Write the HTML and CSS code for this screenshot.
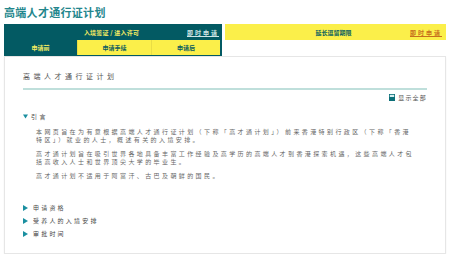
FILE: index.html
```html
<!DOCTYPE html>
<html lang="zh-CN">
<head>
<meta charset="utf-8">
<link rel="stylesheet" href="styles.css">
</head>
<body>
<div class="page">
  <h1 class="title">高端人才通行证计划</h1>
  <div class="tabs">
    <div class="tab-main">
      <div class="tab-top">
        <span></span>
        <span class="tab-label">入境签证 / 进入许可</span>
        <a class="apply apply-light" href="#">即时申请</a>
      </div>
      <div class="tab-sub">
        <span class="sub sub-active">申请前</span>
        <span class="sub">申请手续</span>
        <span class="sub">申请后</span>
      </div>
    </div>
    <div class="tab-side">
      <span></span>
      <span class="tab-label-dark">延长逗留期限</span>
      <a class="apply apply-orange" href="#">即时申请</a>
    </div>
  </div>
  <div class="card">
    <h2 class="card-title">高端人才通行证计划</h2>
    <div class="show-all">
      <svg class="show-icon" width="6" height="7" viewBox="0 0 6 7"><rect x="0" y="0" width="6" height="7" fill="#0b6f78"/><rect x="0.8" y="0.8" width="4.4" height="2.2" fill="#d6eef0"/></svg>
      <span>显示全部</span>
    </div>
    <div class="section open">
      <div class="sec-head">
        <svg class="tri" width="5" height="5" viewBox="0 0 5 5"><polygon points="0,0.5 5,0.5 2.5,4.5" fill="#1a8fa0"/></svg>
        <span>引言</span>
      </div>
      <div class="sec-body">
        <p>本网页旨在为有意根据高端人才通行证计划（下称「高才通计划」）前来香港特别行政区（下称「香港特区」）就业的人士，概述有关的入境安排。</p>
        <p>高才通计划旨在吸引世界各地具备丰富工作经验及高学历的高端人才到香港探索机遇，这些高端人才包括高收入人士和世界顶尖大学的毕业生。</p>
        <p>高才通计划不适用于阿富汗、古巴及朝鲜的国民。</p>
      </div>
    </div>
    <div class="links">
      <div class="sec-link"><svg class="tri-r" width="5" height="6" viewBox="0 0 5 6"><polygon points="0,0 5,3 0,6" fill="#1a8fa0"/></svg><span>申请资格</span></div>
      <div class="sec-link"><svg class="tri-r" width="5" height="6" viewBox="0 0 5 6"><polygon points="0,0 5,3 0,6" fill="#1a8fa0"/></svg><span>受养人的入境安排</span></div>
      <div class="sec-link"><svg class="tri-r" width="5" height="6" viewBox="0 0 5 6"><polygon points="0,0 5,3 0,6" fill="#1a8fa0"/></svg><span>审批时间</span></div>
    </div>
  </div>
</div>
</body>
</html>
```

FILE: styles.css
```css
* { box-sizing: border-box; }
html, body { margin: 0; padding: 0; background: #ffffff; }
body { font-family: "Noto Sans CJK SC", "Noto Sans", sans-serif; }
.page { padding: 4px 4px 0 4px; width: 450px; }
.title {
  margin: 0;
  height: 20px;
  font-size: 11px;
  line-height: 17px;
  font-weight: 700;
  letter-spacing: 0.3px;
  color: #23868c;
}
.tabs {
  display: grid;
  grid-template-columns: 218px 221px;
  column-gap: 3px;
  align-items: start;
}
.tab-main { background: #035a63; padding: 0 2px 1px 0; }
.tab-top {
  display: grid;
  grid-template-columns: 1fr auto 1fr;
  align-items: center;
  height: 16px;
  padding-right: 1px;
}
.tab-label { font-size: 6px; font-weight: 700; color: #f6ec62; letter-spacing: 0.2px; }
.apply { justify-self: end; font-size: 6px; font-weight: 700; letter-spacing: 2px; text-decoration: underline; }
.apply-light { color: #cfe6e6; }
.apply-orange { color: #c7701c; }
.tab-sub { display: grid; grid-template-columns: 73px 74px 1fr; height: 15px; }
.sub {
  display: flex; align-items: center; justify-content: center;
  background: #fbef4a; color: #0b5b5f;
  font-size: 6px; font-weight: 700;
  border-left: 1px solid #e9dd45;
}
.sub-active { background: #035a63; color: #f6ec62; border-left: none; }
.tab-side {
  display: grid;
  grid-template-columns: 1fr auto 1fr;
  align-items: center;
  height: 16px;
  background: #fbef4a;
  padding-right: 4px;
}
.tab-label-dark { font-size: 6px; font-weight: 700; color: #0b6260; }
.card {
  margin-top: 0;
  width: 442px;
  border: 1px solid #e6e6e6;
  box-shadow: 0 1px 2px rgba(0,0,0,0.05);
  padding: 14px 18px 13px 18px;
  color: #555;
}
.card-title {
  margin: 0;
  font-size: 7px;
  line-height: 10px;
  font-weight: 400;
  letter-spacing: 3.5px;
  color: #555;
  padding-bottom: 7px;
  border-bottom: 2px solid #bfdfdb;
}
.show-all {
  display: flex; justify-content: flex-end; align-items: center; gap: 3px;
  margin-top: 3px; height: 8px;
  font-size: 6px; letter-spacing: 1.2px; color: #555;
}
.sec-head {
  display: flex; align-items: center; gap: 3px;
  margin-top: 11px; height: 8px;
  font-size: 6px; letter-spacing: 2.4px; color: #444;
}
.sec-body { padding-left: 13px; width: 392px; }
.sec-body p {
  margin: 8px 0 0 0;
  font-size: 6px; line-height: 8px; letter-spacing: 2.4px; color: #666;
}
.sec-body p + p { margin-top: 6px; }
.links { margin-top: 21px; }
.sec-link {
  display: flex; align-items: center; gap: 5px;
  height: 13px;
  font-size: 6px; letter-spacing: 2.2px; color: #444;
}
```
